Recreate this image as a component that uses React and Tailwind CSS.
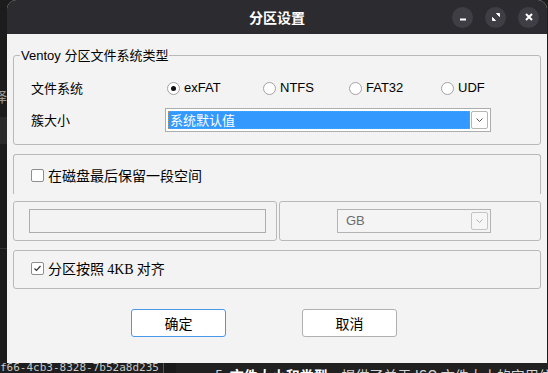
import React from 'react';

const cjk = { fontFamily: '"Noto Sans CJK SC", "Liberation Sans", sans-serif' };
const latin = { fontFamily: '"Liberation Sans", "Noto Sans CJK SC", sans-serif' };

const Radio = ({ checked, label, width }) => (
  <div className="flex items-center" style={{ width }}>
    <span className="flex h-[13px] w-[13px] items-center justify-center rounded-full border border-[#a3a3a3] bg-white">
      {checked && <span className="h-[5px] w-[5px] rounded-full bg-[#111]" />}
    </span>
    <span className="ml-[4px] text-[13px] leading-[16px] text-black" style={latin}>{label}</span>
  </div>
);

const Check = ({ checked }) => (
  <span className="flex h-[13px] w-[13px] items-center justify-center rounded-[2px] border border-[#8e8e8e] bg-white">
    {checked && (
      <svg width="9" height="9" viewBox="0 0 9 9">
        <path d="M1.5 4.5l2 2 4-4.5" fill="none" stroke="#333" strokeWidth="1.2" />
      </svg>
    )}
  </span>
);

const Chevron = ({ color }) => (
  <svg width="7" height="4" viewBox="0 0 7 4">
    <path d="M0.5 0.5l3 3 3-3" fill="none" stroke={color} strokeWidth="1" />
  </svg>
);

const TitleButton = ({ children }) => (
  <div className="flex h-[21px] w-[21px] items-center justify-center rounded-full bg-[#3f3e44]">{children}</div>
);

const App = () => (
  <div className="flex h-[373px] w-[548px] flex-col overflow-hidden bg-[#1c1c1c]">
    <div className="flex h-[363px]">
      {/* left edge of the window behind */}
      <div className="flex w-[7px] flex-col overflow-hidden">
        <div className="mt-[88px] flex h-[16px] justify-end overflow-hidden">
          <span className="shrink-0 text-[14px] leading-[16px] text-[#9a9a9a]" style={cjk}>译</span>
        </div>
        <div className="mt-[13px] h-[27px] bg-[#2a2a2a]" />
        <div className="mt-[104px] h-px bg-[#333]" />
      </div>

      {/* dialog */}
      <div className="flex w-[540px] flex-col overflow-hidden rounded-t-[9px] bg-[#f3f3f3]">
        <div className="flex h-[34px] items-center bg-[#2c2b30]">
          <div className="flex-1 pl-[242px] text-[14px] font-bold text-white" style={cjk}>分区设置</div>
          <div className="mr-[8px] flex gap-[12px]">
            <TitleButton>
              <svg width="10" height="10" viewBox="0 0 10 10">
                <rect x="2" y="6.5" width="6" height="2" fill="#fff" />
              </svg>
            </TitleButton>
            <TitleButton>
              <svg width="10" height="10" viewBox="0 0 10 10">
                <path d="M5.5 1.5h3v3z" fill="#fff" stroke="#fff" strokeWidth="1" />
                <path d="M4.5 8.5h-3v-3z" fill="#fff" stroke="#fff" strokeWidth="1" />
              </svg>
            </TitleButton>
            <TitleButton>
              <svg width="10" height="10" viewBox="0 0 10 10">
                <path d="M2 2l6 6M8 2l-6 6" stroke="#fff" strokeWidth="2" />
              </svg>
            </TitleButton>
          </div>
        </div>

        <div className="flex flex-col px-[6px] pt-[13px]">
          <fieldset className="rounded-[3px] border border-[#b9b9b9] pb-[12px]">
            <legend className="ml-[6px] px-[1px] text-[13px] leading-[16px] text-black" style={latin}>
              Ventoy <span style={cjk}>分区文件系统类型</span>
            </legend>
            <div className="mt-[12px] flex h-[24px] items-center pl-[17px]">
              <div className="w-[134px] text-[13px] text-black" style={cjk}>文件系统</div>
              <div className="ml-[2px] flex items-center">
                <Radio checked label="exFAT" width={96} />
                <Radio label="NTFS" width={86} />
                <Radio label="FAT32" width={92} />
                <Radio label="UDF" width={50} />
              </div>
            </div>
            <div className="mt-[8px] flex h-[24px] items-center pl-[17px]">
              <div className="w-[134px] text-[13px] text-black" style={cjk}>簇大小</div>
              <div className="flex h-[24px] w-[326px] items-center gap-[1px] border border-[#adadad] bg-white p-[2px]">
                <div className="flex h-[18px] flex-1 items-center border border-dotted border-[#c98a4a] bg-[#3399ff] pl-[1px] text-[13px] text-white" style={cjk}>
                  系统默认值
                </div>
                <div className="flex h-[18px] w-[17px] items-center justify-center rounded-[2px] border border-[#b5b5b5] bg-white">
                  <Chevron color="#555" />
                </div>
              </div>
            </div>
          </fieldset>

          <div className="mt-[9px] h-[40px] rounded-t-[3px] border-x border-t border-[#b9b9b9] pl-[17px] pt-[14px]">
            <div className="flex h-[13px] items-center">
              <Check />
              <span className="ml-[4px] text-[14px] text-black" style={cjk}>在磁盘最后保留一段空间</span>
            </div>
          </div>

          <div className="mt-[7px] flex h-[40px] gap-[2px]">
            <div className="w-[264px] rounded-[3px] border border-[#b9b9b9] pl-[15px] pt-[7px]">
              <div className="h-[24px] w-[237px] border border-[#adadad] bg-[#f3f3f3]" />
            </div>
            <div className="flex-1 rounded-[3px] border border-[#b9b9b9] pl-[57px] pt-[7px]">
              <div className="flex h-[24px] w-[154px] items-center border border-[#b4b4b4] bg-[#f4f4f4] p-[2px]">
                <span className="flex-1 pl-[6px] text-[13px] text-[#6d6d6d]" style={latin}>GB</span>
                <div className="flex h-[18px] w-[17px] items-center justify-center rounded-[2px] border border-[#c4c4c4] bg-[#f6f6f6]">
                  <Chevron color="#b0b0b0" />
                </div>
              </div>
            </div>
          </div>

          <div className="mt-[9px] h-[39px] rounded-[3px] border border-[#b9b9b9] pl-[17px] pt-[11px]">
            <div className="flex h-[13px] items-center">
              <Check checked />
              <span className="ml-[4px] text-[14px] text-black" style={cjk}>
                分区按照 <span style={{ fontFamily: '"Liberation Serif", serif' }}>4KB</span> 对齐
              </span>
            </div>
          </div>

          <div className="mt-[20px] flex pl-[118px]">
            <button className="flex h-[28px] w-[95px] items-center justify-center rounded-[3px] border border-[#4a98ea] bg-white text-[14px] text-black" style={cjk}>
              确定
            </button>
            <button className="ml-[76px] flex h-[28px] w-[95px] items-center justify-center rounded-[3px] border border-[#b0b0b0] bg-white text-[14px] text-black" style={cjk}>
              取消
            </button>
          </div>
        </div>
      </div>
      <div className="w-px" />
    </div>

    {/* strip of the editor behind */}
    <div className="flex h-[10px] overflow-hidden">
      <div className="w-[163px] overflow-hidden bg-[#1e1e1e]">
        <div className="-mt-[2px] whitespace-nowrap text-[11px] leading-[13px] text-[#c8c8c8]" style={{ fontFamily: '"DejaVu Sans Mono", monospace' }}>
          f66-4cb3-8328-7b52a8d235
        </div>
      </div>
      <div className="w-px bg-[#555]" />
      <div className="w-[12px] bg-[#1a1a1a]" />
      <div className="flex-1 overflow-hidden bg-[#202020] pl-[39px]">
        <div className="mt-[3px] whitespace-nowrap text-[14px] leading-[18px] text-[#d4d4d4]" style={cjk}>
          5. <b className="text-white">文件大小和类型</b> – 提供了关于 ISO 文件大小的实用信息
        </div>
      </div>
    </div>
  </div>
);

export default App;
